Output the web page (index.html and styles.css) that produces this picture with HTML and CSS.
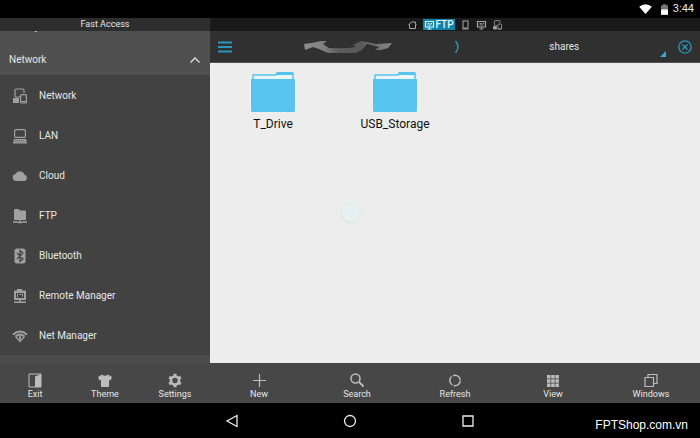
FILE: index.html
```html
<!DOCTYPE html>
<html lang="en">
<head>
<meta charset="utf-8">
<title>File Explorer</title>
<link rel="stylesheet" href="styles.css">
</head>
<body>
<svg class="sprite" aria-hidden="true">
  <symbol id="devices" viewBox="0 0 16 16"><path d="M3 9V2.200Q3 1 4.200 1H11Q12 1 12 2V5" fill="none" stroke="currentColor" stroke-width="1.200"/><path d="M1 10h6v5H1z" fill="currentColor"/><path d="M3 9h5" stroke="currentColor" stroke-width="1"/><rect x="8.600" y="6.600" width="5.800" height="8.400" rx="1" fill="none" stroke="currentColor" stroke-width="1.200"/><path d="M9 13.500h5" stroke="currentColor"/></symbol>
  <symbol id="screen" viewBox="0 0 10 10"><path d="M1 1.500h8v5.500H1z" fill="none" stroke="currentColor" stroke-width="1.200"/><path d="M3 3.500h2M6 3.500h1.500M3 5h4M5 7v2M3 9h4" fill="none" stroke="currentColor" stroke-width=".9"/></symbol>
</svg>

<header class="status">
  <svg class="status-wifi" viewBox="0 0 14 11"><path d="M0 3Q7-2.500 14 3L7 11z" fill="#fff"/></svg>
  <svg class="status-battery" viewBox="0 0 8 12"><path d="M2 0h4v1.500h2V12H0V1.500h2z" fill="#777"/><path d="M0 6h8v6H0z" fill="#fff"/></svg>
  <time>3:44</time>
</header>

<div class="app">
  <aside class="sidebar">
    <h1 class="sidebar-title">Fast Access</h1>
    <nav class="sidebar-list">
      <div class="scrolled"><button class="group" type="button">Library</button></div>
      <button class="group" type="button" aria-expanded="true">Network
        <svg class="caret" viewBox="0 0 12 8"><path d="M1.500 6.500L6 2l4.500 4.500" fill="none" stroke="#ddd" stroke-width="1.300"/></svg>
      </button>
      <a class="item" href="#network"><svg class="icon"><use href="#devices"/></svg>Network</a>
      <a class="item" href="#lan"><svg class="icon" viewBox="0 0 16 16"><rect x="2.600" y="1.600" width="10.800" height="7.800" rx="1" fill="none" stroke="currentColor" stroke-width="1.200"/><path d="M2 11h12l1 4.500H1z" fill="currentColor"/><path d="M3 12.500h10M2.500 14h11" stroke="#424242" stroke-width=".6" stroke-dasharray="1 1"/></svg>LAN</a>
      <a class="item" href="#cloud"><svg class="icon" viewBox="0 0 16 16"><path d="M4 13a3.500 3.500 0 0 1-.6-6.900 5 5 0 0 1 9.200.7A3.200 3.200 0 0 1 12.500 13z" fill="currentColor"/></svg>Cloud</a>
      <a class="item" href="#ftp"><svg class="icon" viewBox="0 0 16 16"><path d="M2 2q0-1 1-1h3.500L8 2.500h5q1 0 1 1V12H2z" fill="currentColor"/><path d="M8 11v4M1 14h5M10 14h5M6 14.500h4" stroke="currentColor" stroke-width="1.400"/></svg>FTP</a>
      <a class="item" href="#bluetooth"><svg class="icon" viewBox="0 0 16 16"><rect x="2.500" y=".5" width="11" height="15" rx="2.500" fill="currentColor"/><path d="M5 5l6 6-3 2.500v-11L11 5l-6 6" fill="none" stroke="#424242" stroke-width="1.200"/></svg>Bluetooth</a>
      <a class="item" href="#remote"><svg class="icon" viewBox="0 0 16 16"><path d="M2 2.500h3V1h5v1.500h4V12H2z" fill="currentColor"/><path d="M4 5h8v5H4z" fill="#424242"/><path d="M5.500 5.500v4M7 6.500h2.500M10.500 5.500v3" stroke="currentColor" stroke-width=".9"/><path d="M8 12v3M2 14.300h12" stroke="currentColor" stroke-width="1.400"/></svg>Remote Manager</a>
      <a class="item" href="#net"><svg class="icon" viewBox="0 0 16 16"><path d="M1 6.500Q8 .5 15 6.500M3.500 8.500Q8 4.500 12.500 8.500" fill="none" stroke="currentColor" stroke-width="1.800"/><path d="M3.500 8.500L8 13.500l4.500-5" fill="none" stroke="currentColor" stroke-width="1.300"/><path d="M7 9l2-2v4l-2 1.500z" fill="currentColor"/></svg>Net Manager</a>
    </nav>
    <footer class="bar">
      <button type="button"><svg class="icon" viewBox="0 0 16 16"><path d="M2 2h12v13H2z" fill="none" stroke="currentColor"/><path d="M8 4.500L14 2v13H8z" fill="currentColor"/></svg>Exit</button>
      <button type="button"><svg class="icon" viewBox="0 0 16 16"><path d="M5 2.500Q8 5 11 2.500L15 5l-1.500 3.500-1.500-.6V15H4V7.900l-1.500.6L1 5z" fill="currentColor"/></svg>Theme</button>
      <button type="button"><svg class="icon" viewBox="0 0 16 16"><circle cx="8" cy="8.500" r="4" fill="none" stroke="currentColor" stroke-width="2.600"/><path d="M8 1.700v3M8 12.300v3M2.200 5.100l2.600 1.500M11.200 10.400l2.600 1.500M2.200 11.900l2.600-1.500M11.200 6.600l2.600-1.500" stroke="currentColor" stroke-width="3"/></svg>Settings</button>
    </footer>
  </aside>

  <main class="files">
    <nav class="tabs" aria-label="Windows">
      <a href="#home" aria-label="Home"><svg class="tab-icon" viewBox="0 0 10 10"><path d="M1 5L4 2h4v2l1 1M2 4.500V8.500h6V4.500" fill="none" stroke="currentColor"/></svg></a>
      <a class="tab-active" href="#ftp"><svg class="tab-icon"><use href="#screen"/></svg>FTP</a>
      <a href="#phone" aria-label="Phone"><svg class="tab-icon" viewBox="0 0 10 10"><rect x="2.500" y="1" width="5" height="8" fill="none" stroke="currentColor"/><path d="M3 8h4" stroke="currentColor"/></svg></a>
      <a href="#screen-tab" aria-label="Remote"><svg class="tab-icon"><use href="#screen"/></svg></a>
      <a href="#network-tab" aria-label="Network"><svg class="tab-icon"><use href="#devices"/></svg></a>
    </nav>
    <div class="toolbar">
      <button class="menu" type="button" aria-label="Menu"><svg viewBox="0 0 14 12"><path d="M0 1.500h14M0 6h14M0 10.500h14" stroke="#2a95bd" stroke-width="2"/></svg></button>
      <div class="path">
        <a href="#host" aria-label="Host"><svg class="smudge" viewBox="0 0 92 14"><defs><linearGradient id="g"><stop offset="0" stop-color="#8c8c8c"/><stop offset=".22" stop-color="#808080"/><stop offset=".4" stop-color="#5c5c5c"/><stop offset=".65" stop-color="#585858"/><stop offset="1" stop-color="#888"/></linearGradient><filter id="soft"><feGaussianBlur stdDeviation=".7"/></filter></defs><path d="M1 4Q10 3 18 1l6 0-4 3 6 4q16 1 27-1l-3-2 8-4q8 1 15 3l16-1-4 5-7 2-6 0 4-3-12-3-5 6-6 3-28 0-9-4-6-2-8 3z" fill="url(#g)" filter="url(#soft)"/></svg></a>
        <svg class="divider" viewBox="0 0 6 14"><path d="M1.500 1q5 6 0 12" fill="none" stroke="#2a95bd" stroke-width="1.400"/></svg>
        <a href="#shares">shares</a>
        <svg class="corner" viewBox="0 0 6 6"><path d="M6 0v6H0z" fill="#36a9d6"/></svg>
      </div>
      <button class="close" type="button" aria-label="Close"><svg viewBox="0 0 14 14"><circle cx="7" cy="7" r="6.200" fill="none" stroke="#2a95bd" stroke-width="1.300"/><path d="M4.500 4.500l5 5M9.500 4.500l-5 5" stroke="#2a95bd" stroke-width="1.300"/></svg></button>
    </div>
    <section class="folders">
      <a class="folder" href="#t-drive"><svg viewBox="0 0 44 40"><path d="M2 8V3h23l2-2h15v7" fill="#e9f7fd" stroke="#58c3ef" stroke-width="1.500"/><path d="M24 3l2-3h14q2 0 2 3z" fill="#58c3ef"/><path d="M0 7h44v31q0 2-1 2H1q-1 0-1-2z" fill="#58c3ef"/></svg>T_Drive</a>
      <a class="folder" href="#usb"><svg viewBox="0 0 44 40"><path d="M2 8V3h23l2-2h15v7" fill="#e9f7fd" stroke="#58c3ef" stroke-width="1.500"/><path d="M24 3l2-3h14q2 0 2 3z" fill="#58c3ef"/><path d="M0 7h44v31q0 2-1 2H1q-1 0-1-2z" fill="#58c3ef"/></svg>USB_Storage</a>
      <span class="touch"></span>
    </section>
    <footer class="bar">
      <button type="button"><svg class="icon" viewBox="0 0 16 16"><path d="M8.500 2v13M2 8.500h13" stroke="currentColor" stroke-width="1.200"/></svg>New</button>
      <button type="button"><svg class="icon" viewBox="0 0 16 16"><circle cx="6.500" cy="6.500" r="4.500" fill="none" stroke="currentColor" stroke-width="1.500"/><path d="M10 10l4.500 4.500" stroke="currentColor" stroke-width="1.800"/></svg>Search</button>
      <button type="button"><svg class="icon" viewBox="0 0 16 16"><circle cx="8" cy="8.500" r="5.200" fill="none" stroke="currentColor" stroke-width="1.500" stroke-dasharray="9.400 1.490"/></svg>Refresh</button>
      <button type="button"><svg class="icon" viewBox="0 0 16 16"><path d="M2 3h3.500v3.500H2zM6.200 3h3.500v3.500H6.200zM10.400 3h3.500v3.500h-3.500zM2 7.200h3.500v3.500H2zM6.200 7.200h3.500v3.500H6.200zM10.400 7.200h3.500v3.500h-3.500zM2 11.400h3.500v3.500H2zM6.200 11.400h3.500v3.500H6.200zM10.400 11.400h3.500v3.500h-3.500z" fill="currentColor"/></svg>View</button>
      <button type="button"><svg class="icon" viewBox="0 0 16 16"><path d="M2 5.500h8.500v9H2zM5 5.500v-3h9v9h-3.500" fill="none" stroke="currentColor" stroke-width="1.200"/></svg>Windows</button>
    </footer>
  </main>
</div>

<footer class="system">
  <button type="button" aria-label="Back"><svg viewBox="0 0 14 14"><path d="M12 1.500v11L2 7z" fill="none" stroke="#eee" stroke-width="1.300"/></svg></button>
  <button type="button" aria-label="Home"><svg viewBox="0 0 14 14"><circle cx="7" cy="7" r="5.500" fill="none" stroke="#eee" stroke-width="1.300"/></svg></button>
  <button type="button" aria-label="Recent"><svg viewBox="0 0 14 14"><path d="M2 2h10v10H2z" fill="none" stroke="#eee" stroke-width="1.300"/></svg></button>
  <span class="watermark">FPTShop.com.vn</span>
</footer>
</body>
</html>
```
FILE: styles.css
```css
* { box-sizing: border-box; }
body {
  margin: 0;
  min-height: 100vh;
  display: flex;
  flex-direction: column;
  background: #000;
  color: #e6e6e6;
  font: 10px/14px Roboto, sans-serif;
}
button { margin: 0; padding: 0; border: 0; background: none; color: inherit; font: inherit; }
a { color: inherit; text-decoration: none; }
svg { display: block; flex: none; }
.sprite { position: absolute; width: 0; height: 0; }

.status {
  height: 18px;
  padding: 0 6px;
  display: flex;
  align-items: center;
  justify-content: flex-end;
  font-size: 11px;
}
.status-wifi { width: 13px; height: 10px; margin-right: 9px; }
.status-battery { width: 7px; height: 11px; margin-right: 5px; }

.app { flex: 1; display: flex; }
.sidebar { width: 30%; display: flex; flex-direction: column; background: #424242; }
.sidebar-title {
  margin: 0;
  height: 13px;
  background: #2e2e2e;
  text-align: center;
  font-size: 9px;
  line-height: 13px;
  font-weight: 400;
}
.sidebar-list { flex: 1; border-bottom: 8px solid #4c4c4c; }
.scrolled { height: 13px; overflow: hidden; display: flex; align-items: flex-end; background: #4d4d4d; }
.group {
  width: 100%;
  height: 31px;
  flex: none;
  padding: 0 9px;
  display: flex;
  align-items: center;
  justify-content: space-between;
  background: #505050;
}
.scrolled .group { padding-bottom: 4px; }
.caret { width: 12px; height: 8px; }
.item { height: 40px; padding: 2px 12px 0; display: flex; align-items: center; gap: 11px; }
.icon { width: 16px; height: 16px; color: #a0a0a0; }

.bar { height: 40px; display: flex; background: #474747; }
.bar button {
  flex: 1;
  display: flex;
  flex-direction: column;
  align-items: center;
  justify-content: flex-end;
  padding-bottom: 2px;
  font-size: 9px;
  line-height: 13px;
}
.bar .icon { color: #bcbcbc; }

.files { flex: 1; display: flex; flex-direction: column; }
.tabs {
  height: 13px;
  display: flex;
  align-items: center;
  justify-content: center;
  gap: 5px;
  background: #1a1a1a;
  color: #a8a8a8;
}
.tab-icon { width: 11px; height: 10px; }
.tab-active {
  height: 11px;
  padding: 0 1px;
  display: flex;
  align-items: center;
  background: #0e84ac;
  color: #e4f5fb;
  font-weight: 500;
  line-height: 11px;
}
.toolbar { height: 32px; padding: 0 8px; display: flex; align-items: center; background: #303030; border-bottom: 1px solid #555; }
.menu svg { width: 14px; height: 12px; }
.path { flex: 1; align-self: stretch; position: relative; display: flex; align-items: center; margin: 0 9px 0 12px; }
.path a { flex: 1; display: flex; justify-content: center; }
.smudge { width: 92px; height: 14px; }
.divider { width: 6px; height: 14px; }
.corner { position: absolute; right: 3px; bottom: 5px; width: 6px; height: 6px; }
.close svg { width: 14px; height: 14px; }

.folders { flex: 1; position: relative; display: flex; align-items: flex-start; padding: 9px 2px; background: #ededed; color: #111; }
.folder { width: 122px; display: flex; flex-direction: column; align-items: center; gap: 5px; font-size: 12px; }
.folder svg { width: 44px; height: 40px; }
.touch {
  position: absolute;
  left: 131px;
  top: 139px;
  width: 20px;
  height: 20px;
  border-radius: 50%;
  background: radial-gradient(#e6f0f3 50%, #e1e8ea);
  box-shadow: 0 1px 2px #d8dcdd;
}

.system { height: 35px; position: relative; display: flex; align-items: center; justify-content: center; gap: 104px; }
.system svg { width: 14px; height: 14px; }
.watermark { position: absolute; right: 12px; bottom: 6px; color: #fff; font: 12px/14px "Liberation Sans", sans-serif; }
```
